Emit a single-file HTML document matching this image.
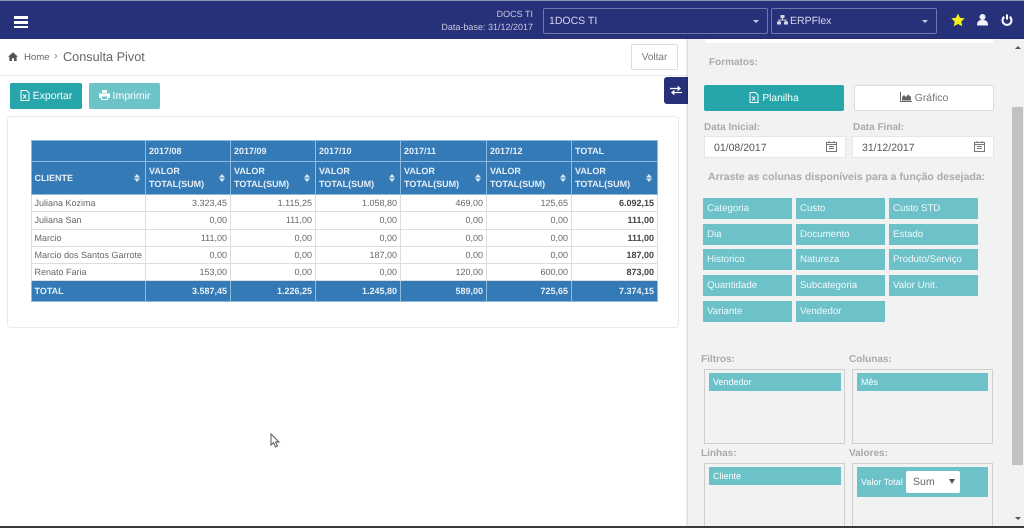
<!DOCTYPE html>
<html lang="pt-BR">
<head>
<meta charset="utf-8">
<title>Consulta Pivot</title>
<style>
html,body{margin:0;padding:0;width:1024px;height:528px;overflow:hidden;background:#fff;font-family:"Liberation Sans",sans-serif;color:#555;text-rendering:geometricPrecision}
*{box-sizing:border-box}
#wrap{position:absolute;left:0;top:0;width:1024px;height:528px;filter:blur(.3px)}
.a{position:absolute}
.t{position:absolute;white-space:nowrap}
#top{left:0;top:0;width:1024px;height:39px;background:#27317a;border-top:1px solid #8f93b3}
.sel{position:absolute;top:7px;height:26px;border:1px solid #6d77ad;border-radius:2px;color:#d4d7e8;font-size:10.5px;line-height:24px;padding-left:5px}
.caret{position:absolute;top:11px;width:0;height:0;border-left:3px solid transparent;border-right:3px solid transparent;border-top:3px solid #ccd}
.btn{position:absolute;border-radius:2px;color:#fff;font-size:10.5px;text-align:center}
table{position:absolute;left:31px;top:140px;border-collapse:collapse;table-layout:fixed;width:626px;font-size:9px;color:#555}
td,th{border:1px solid #ddd;padding:0 3px;overflow:hidden;white-space:nowrap}
td:first-child,th:first-child{padding-left:2.500px}
th{background:#337ab7;color:#e8eff6;border-color:#8dbbe0;text-align:left;font-weight:bold;position:relative}
td{text-align:right;height:17.3px;color:#666}
td.l{text-align:left}
td.b{font-weight:bold;color:#444}
tr.tot td{background:#337ab7;color:#e8eff6;font-weight:bold;border-color:#8dbbe0;height:21px}
th.v{line-height:13.5px;white-space:normal;padding-right:14px}
.sort{position:absolute;right:5px;top:12px;width:6px;height:8px}
.chip{position:absolute;width:89px;height:21px;background:#6dc2ca;color:#f0f9fa;font-size:9.7px;line-height:22px;padding-left:4px}
.lab{position:absolute;color:#aaa;font-size:10px;font-weight:bold;white-space:nowrap;line-height:14px}
.box{position:absolute;border:1px solid #d0cfcf;width:141px}
.in{position:absolute;top:136px;height:22px;background:#fff;border:1px solid #e6e6e6;font-size:10.5px;line-height:22px;padding-left:9px;color:#555;width:142px}
.bar{position:absolute;height:18px;background:#6dc2ca;color:#fff;font-size:9px;line-height:19px;padding-left:4px}
</style>
</head>
<body>
<div id="wrap">
<div id="top" class="a">
  <div class="a" style="left:14px;top:15px;width:14px;height:2.500px;background:#fff"></div>
  <div class="a" style="left:14px;top:20px;width:14px;height:2.500px;background:#fff"></div>
  <div class="a" style="left:14px;top:24.500px;width:14px;height:2.500px;background:#fff"></div>
  <div class="t" style="right:491px;top:8px;font-size:9px;color:#c6c9dc">DOCS TI</div>
  <div class="t" style="right:491px;top:21px;font-size:9px;color:#c6c9dc">Data-base: 31/12/2017</div>
  <div class="sel" style="left:543px;width:225px">1DOCS TI<span class="caret" style="left:209px"></span></div>
  <div class="sel" style="left:771px;width:166px"><svg width="11" height="10" viewBox="0 0 11 10" style="vertical-align:-1px;margin-right:2px"><path d="M3.500 0h4v3h-1.500v1.500h3.500v2h1.500v3h-4v-3h1.500v-1h-6v1h1.500v3h-4v-3h1.500v-2h3.500v-1.500h-1.500z" fill="#d4d7e8"/></svg>ERPFlex<span class="caret" style="left:150px"></span></div>
  <svg class="a" style="left:951px;top:12px" width="14" height="14" viewBox="0 0 14 14"><path d="M7 0.500l2 4.300 4.700.6-3.400 3.200.9 4.700L7 11l-4.200 2.300.9-4.700L.3 5.400 5 4.800z" fill="#f5f01e"/></svg>
  <svg class="a" style="left:977px;top:13px" width="11" height="12" viewBox="0 0 11 12"><circle cx="5.500" cy="3" r="3" fill="#f4f4f8"/><path d="M0 11.500c0-4.500 2-5.500 5.500-5.500s5.500 1 5.500 5.500z" fill="#f4f4f8"/></svg>
  <svg class="a" style="left:1001px;top:13px" width="12" height="12" viewBox="0 0 12 12"><path d="M3.300 2.800a4.500 4.500 0 1 0 5.400 0" fill="none" stroke="#fff" stroke-width="2"/><path d="M6 .5v5" stroke="#fff" stroke-width="2"/></svg>
</div>

<!-- breadcrumb -->
<svg class="a" style="left:8px;top:52px" width="10" height="9" viewBox="0 0 10 9"><path d="M5 .2L10 4.700H8.600V9H6V6.200H4V9H1.400V4.700H0z" fill="#555"/></svg>
<div class="t" style="left:24px;top:52px;font-size:9.6px;color:#666">Home</div>
<div class="t" style="left:54px;top:50px;font-size:11px;color:#777">›</div>
<div class="t" style="left:63px;top:50px;font-size:12.700px;color:#666">Consulta Pivot</div>
<div class="a" style="left:631px;top:44px;width:47px;height:26px;border:1px solid #ddd;border-radius:2px;font-size:10px;line-height:25px;text-align:center;color:#777">Voltar</div>
<div class="a" style="left:0;top:75px;width:688px;height:1px;background:#eaeaea"></div>

<div class="btn" style="left:10px;top:83px;width:72px;height:26px;background:#26a6ab;line-height:26px"><svg width="10" height="11" viewBox="0 0 10 11" style="vertical-align:-2px;margin-right:3px"><path d="M1 .5h5.500L9 3v7.500H1z" fill="none" stroke="#fff"/><path d="M3.200 4.500l3 4M6.200 4.500l-3 4" stroke="#fff"/></svg>Exportar</div>
<div class="btn" style="left:89px;top:83px;width:71px;height:26px;background:#6cc3c8;line-height:26px"><svg width="11" height="10" viewBox="0 0 11 10" style="vertical-align:-1px;margin-right:3px"><path d="M3 0h5v3H3zM0 3.500h11V8H9v2H2V8H0z" fill="#fff"/><path d="M3 6.500h5v2.500H3z" fill="#6cc3c8"/></svg>Imprimir</div>

<div class="a" style="left:664px;top:77px;width:24px;height:27px;background:#27317a;border-radius:3px 0 0 3px"></div>
<svg class="a" style="left:670px;top:86px" width="12" height="9" viewBox="0 0 12 9"><path d="M0 2.500h9M7.500 .5L10 2.500 7.500 4.500M12 6.500H3M4.500 4.500L2 6.500l2.500 2" fill="none" stroke="#fff" stroke-width="1.300"/></svg>

<div class="a" style="left:7px;top:116px;width:672px;height:212px;border:1px dotted #d5d5d5;border-radius:4px"></div>

<table>
<colgroup><col style="width:114px"><col style="width:85px"><col style="width:85px"><col style="width:85px"><col style="width:86px"><col style="width:85px"><col style="width:86px"></colgroup>
<tr style="height:21px"><th></th><th>2017/08</th><th>2017/09</th><th>2017/10</th><th>2017/11</th><th>2017/12</th><th>TOTAL</th></tr>
<tr style="height:33px">
<th>CLIENTE<svg class="sort" viewBox="0 0 6 8"><path d="M3 0l3 3.500H0zM3 8l3-3.500H0z" fill="#dde8f2"/></svg></th>
<th class="v">VALOR TOTAL(SUM)<svg class="sort" viewBox="0 0 6 8"><path d="M3 0l3 3.500H0zM3 8l3-3.500H0z" fill="#dde8f2"/></svg></th>
<th class="v">VALOR TOTAL(SUM)<svg class="sort" viewBox="0 0 6 8"><path d="M3 0l3 3.500H0zM3 8l3-3.500H0z" fill="#dde8f2"/></svg></th>
<th class="v">VALOR TOTAL(SUM)<svg class="sort" viewBox="0 0 6 8"><path d="M3 0l3 3.500H0zM3 8l3-3.500H0z" fill="#dde8f2"/></svg></th>
<th class="v">VALOR TOTAL(SUM)<svg class="sort" viewBox="0 0 6 8"><path d="M3 0l3 3.500H0zM3 8l3-3.500H0z" fill="#dde8f2"/></svg></th>
<th class="v">VALOR TOTAL(SUM)<svg class="sort" viewBox="0 0 6 8"><path d="M3 0l3 3.500H0zM3 8l3-3.500H0z" fill="#dde8f2"/></svg></th>
<th class="v">VALOR TOTAL(SUM)<svg class="sort" viewBox="0 0 6 8"><path d="M3 0l3 3.500H0zM3 8l3-3.500H0z" fill="#dde8f2"/></svg></th>
</tr>
<tr><td class="l">Juliana Kozima</td><td>3.323,45</td><td>1.115,25</td><td>1.058,80</td><td>469,00</td><td>125,65</td><td class="b">6.092,15</td></tr>
<tr><td class="l">Juliana San</td><td>0,00</td><td>111,00</td><td>0,00</td><td>0,00</td><td>0,00</td><td class="b">111,00</td></tr>
<tr><td class="l">Marcio</td><td>111,00</td><td>0,00</td><td>0,00</td><td>0,00</td><td>0,00</td><td class="b">111,00</td></tr>
<tr><td class="l">Marcio dos Santos Garrote</td><td>0,00</td><td>0,00</td><td>187,00</td><td>0,00</td><td>0,00</td><td class="b">187,00</td></tr>
<tr><td class="l">Renato Faria</td><td>153,00</td><td>0,00</td><td>0,00</td><td>120,00</td><td>600,00</td><td class="b">873,00</td></tr>
<tr class="tot"><td class="l">TOTAL</td><td>3.587,45</td><td>1.226,25</td><td>1.245,80</td><td>589,00</td><td>725,65</td><td>7.374,15</td></tr>
</table>

<svg class="a" style="left:270px;top:433px" width="11" height="16" viewBox="0 0 11 16"><path d="M1 1v11l2.500-2.300L5.500 14l2-1-2-4H9z" fill="#fff" stroke="#555" stroke-width="1"/></svg>

<!-- right panel -->
<div class="a" style="left:688px;top:39px;width:336px;height:487px;background:#f2f2f2;box-shadow:-1px 0 2px rgba(0,0,0,.2);overflow:hidden">
  <div class="a" style="left:18px;top:0;width:287px;height:4px;background:#fff"></div>
  <div class="a" style="left:324px;top:0;width:12px;height:487px;background:#f1f1f1"></div>
  <div class="a" style="left:324px;top:68px;width:11px;height:358px;background:#c1c1c1"></div>
  <div class="a" style="left:327px;top:7px;border-left:3px solid transparent;border-right:3px solid transparent;border-bottom:3px solid #555"></div>
  <div class="a" style="left:327px;top:478px;border-left:3px solid transparent;border-right:3px solid transparent;border-top:3px solid #555"></div>
</div>

<div class="lab" style="left:709px;top:56px">Formatos:</div>
<div class="btn" style="left:704px;top:85px;width:140px;height:26px;background:#26a6ab;line-height:28px;font-size:10.2px"><svg width="10" height="11" viewBox="0 0 10 11" style="vertical-align:-2px;margin-right:3px"><path d="M1 .5h5.500L9 3v7.500H1z" fill="none" stroke="#fff"/><path d="M3.200 4.500l3 4M6.200 4.500l-3 4" stroke="#fff"/></svg>Planilha</div>
<div class="btn" style="left:854px;top:85px;width:140px;height:26px;background:#fff;border:1px solid #ddd;color:#777;line-height:26px;font-size:10.4px"><svg width="12" height="10" viewBox="0 0 12 10" style="vertical-align:-1px;margin-right:3px"><path d="M.5 0v9.500H12" fill="none" stroke="#666"/><path d="M2 8.500V5l2-2 2 2 2-2.500L11 5v3.500z" fill="#666"/></svg>Gráfico</div>

<div class="lab" style="left:704px;top:121px">Data Inicial:</div>
<div class="lab" style="left:853px;top:121px">Data Final:</div>
<div class="in" style="left:704px">01/08/2017<svg class="a" style="left:121px;top:4px" width="11" height="11" viewBox="0 0 11 11"><rect x=".5" y="1.500" width="10" height="9" fill="none" stroke="#777"/><path d="M0 3.500h11M3 0v2M8 0v2M3 5.500h5M3 7.500h5" stroke="#777"/></svg></div>
<div class="in" style="left:852px">31/12/2017<svg class="a" style="left:121px;top:4px" width="11" height="11" viewBox="0 0 11 11"><rect x=".5" y="1.500" width="10" height="9" fill="none" stroke="#777"/><path d="M0 3.500h11M3 0v2M8 0v2M3 5.500h5M3 7.500h5" stroke="#777"/></svg></div>
<div class="lab" style="left:708px;top:170px;font-size:10.500px">Arraste as colunas disponíveis para a função desejada:</div>

<div class="chip" style="left:703px;top:198px">Categoria</div>
<div class="chip" style="left:796px;top:198px">Custo</div>
<div class="chip" style="left:889px;top:198px">Custo STD</div>
<div class="chip" style="left:703px;top:224px">Dia</div>
<div class="chip" style="left:796px;top:224px">Documento</div>
<div class="chip" style="left:889px;top:224px">Estado</div>
<div class="chip" style="left:703px;top:249px">Historico</div>
<div class="chip" style="left:796px;top:249px">Natureza</div>
<div class="chip" style="left:889px;top:249px">Produto/Serviço</div>
<div class="chip" style="left:703px;top:275px">Quantidade</div>
<div class="chip" style="left:796px;top:275px">Subcategoria</div>
<div class="chip" style="left:889px;top:275px">Valor Unit.</div>
<div class="chip" style="left:703px;top:301px">Variante</div>
<div class="chip" style="left:796px;top:301px">Vendedor</div>

<div class="lab" style="left:701px;top:353px">Filtros:</div>
<div class="lab" style="left:849px;top:353px">Colunas:</div>
<div class="box" style="left:704px;top:369px;height:75px"></div>
<div class="box" style="left:852px;top:369px;height:75px"></div>
<div class="bar" style="left:709px;top:373px;width:132px">Vendedor</div>
<div class="bar" style="left:857px;top:373px;width:131px">Mês</div>

<div class="lab" style="left:701px;top:447px">Linhas:</div>
<div class="lab" style="left:849px;top:447px">Valores:</div>
<div class="box" style="left:704px;top:463px;height:63px;border-bottom:0"></div>
<div class="box" style="left:852px;top:463px;height:63px;border-bottom:0"></div>
<div class="bar" style="left:709px;top:467px;width:132px">Cliente</div>
<div class="bar" style="left:857px;top:467px;width:131px;height:30px;line-height:31px">Valor Total</div>
<div class="a" style="left:906px;top:471px;width:54px;height:22px;background:#fff;border-radius:2px;font-size:10.500px;line-height:23px;padding-left:7px;color:#666">Sum<span class="a" style="left:43px;top:8px;border-left:3px solid transparent;border-right:3px solid transparent;border-top:5px solid #555"></span></div>

<div class="a" style="left:0;top:526px;width:1024px;height:2px;background:#3a3a3a"></div>
</div>
</body>
</html>
